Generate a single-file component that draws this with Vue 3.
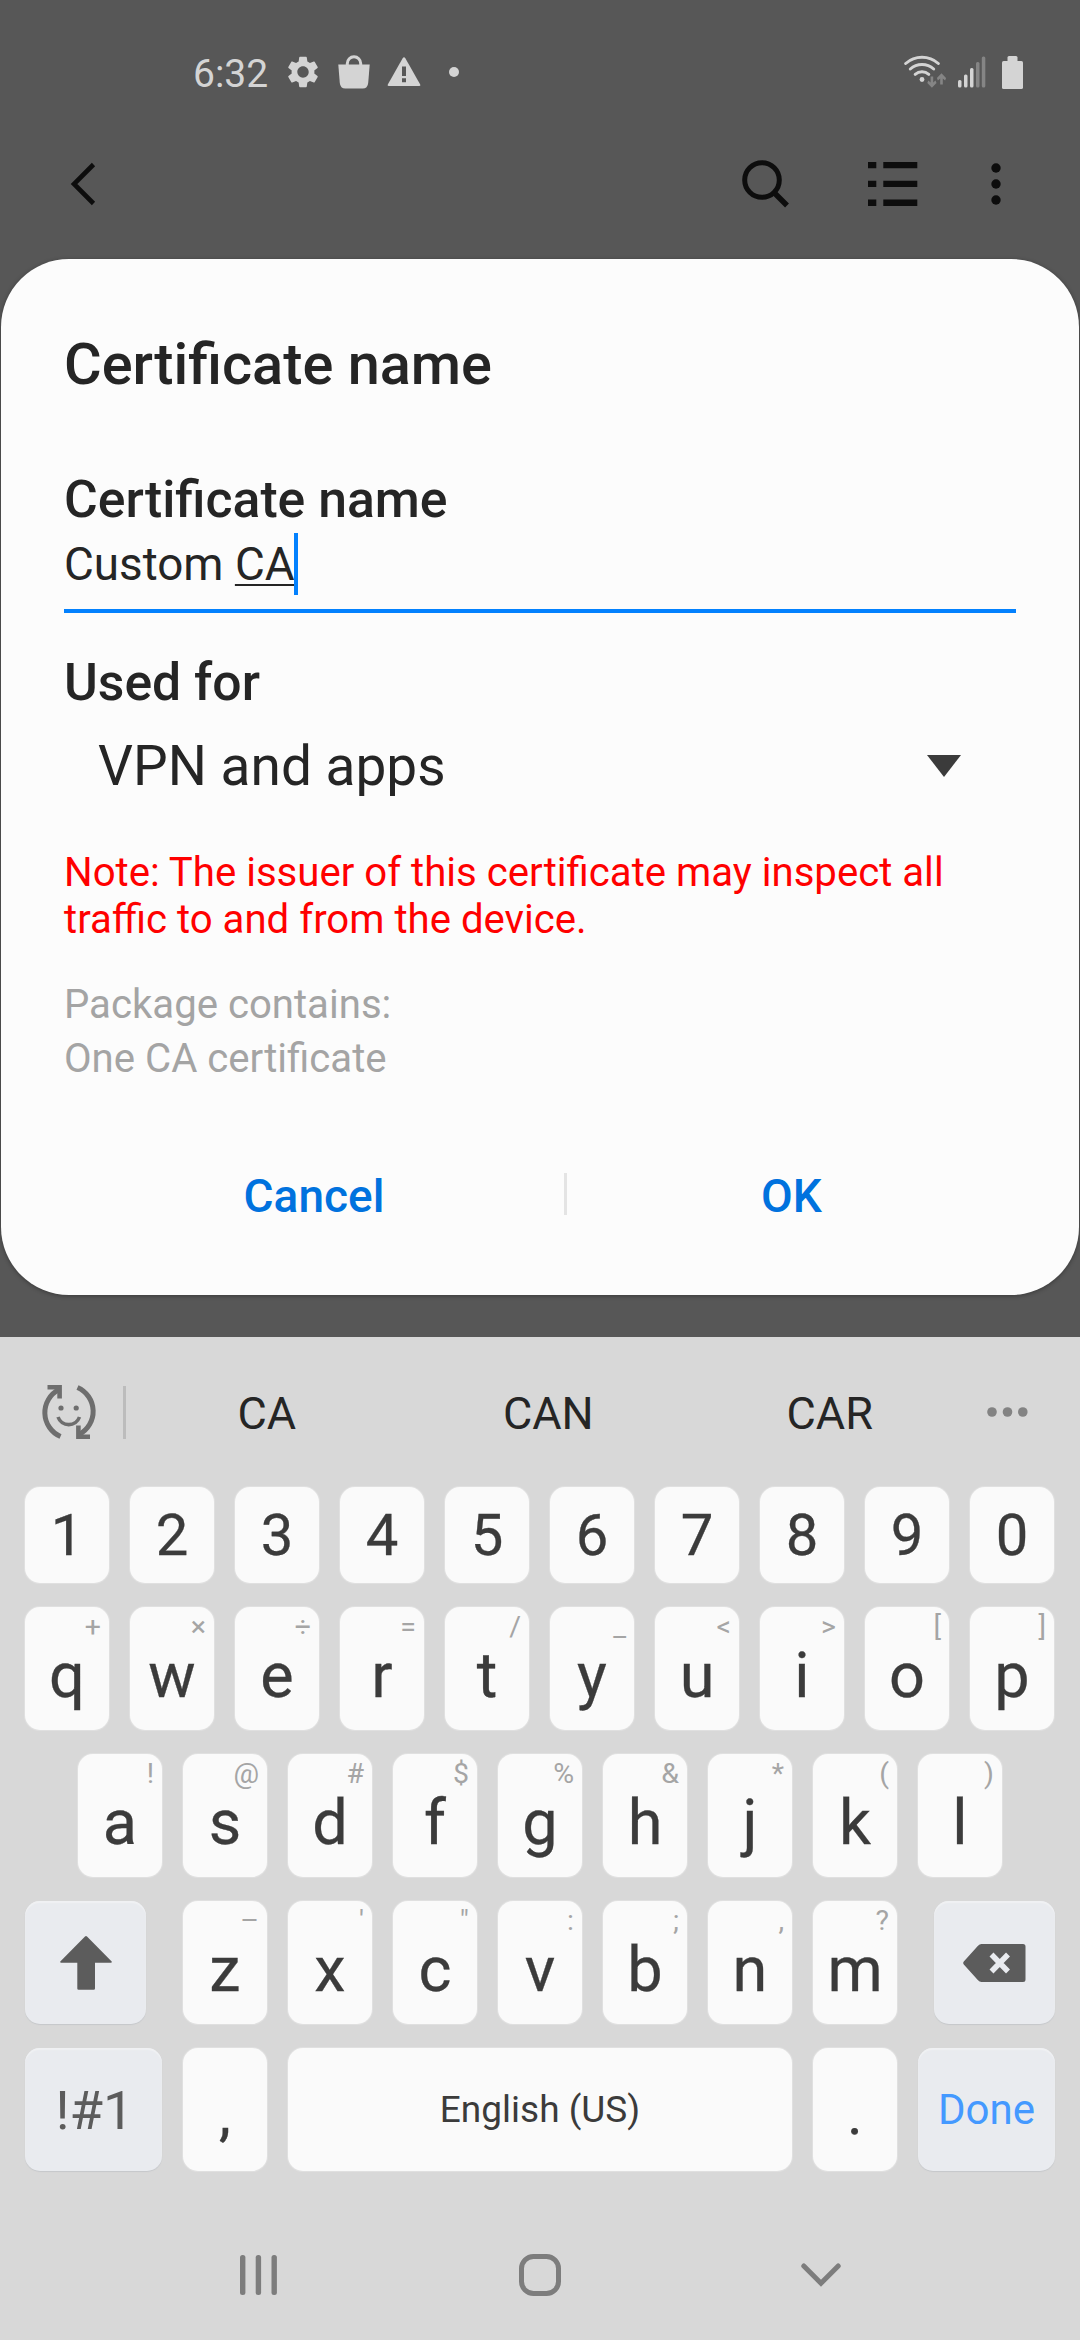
<script setup>
const suggestions = ['CA', 'CAN', 'CAR']
const digits = ['1', '2', '3', '4', '5', '6', '7', '8', '9', '0']
const toKeys = (letters, hints) => [...letters].map((label, i) => ({ label, hint: [...hints][i] }))
const topRow = toKeys('qwertyuiop', '+×÷=/_<>[]')
const homeRow = toKeys('asdfghjkl', '!@#$%&*()')
const bottomRow = toKeys('zxcvbnm', '–\'":;,?')
</script>

<template>
  <div class="screen">
    <header class="status">
      <span class="clock">6:32</span>
      <svg class="gear" width="38" height="38" viewBox="0 0 24 24" fill="#d4d4d4">
        <path d="M19.14 12.94c.04-.3.06-.61.06-.94 0-.32-.02-.64-.07-.94l2.03-1.58a.49.49 0 0 0 .12-.61l-1.92-3.32a.488.488 0 0 0-.59-.22l-2.39.96c-.5-.38-1.03-.7-1.62-.94l-.36-2.54a.484.484 0 0 0-.48-.41h-3.84c-.24 0-.43.17-.47.41l-.36 2.54c-.59.24-1.13.57-1.62.94l-2.39-.96c-.22-.08-.47 0-.59.22L2.74 8.87c-.12.21-.08.47.12.61l2.03 1.58c-.05.3-.09.63-.09.94s.02.64.07.94l-2.03 1.58a.49.49 0 0 0-.12.61l1.92 3.32c.12.22.37.29.59.22l2.39-.96c.5.38 1.03.7 1.62.94l.36 2.54c.05.24.24.41.48.41h3.84c.24 0 .44-.17.47-.41l.36-2.54c.59-.24 1.13-.56 1.62-.94l2.39.96c.22.08.47 0 .59-.22l1.92-3.32c.12-.22.07-.47-.12-.61l-2.01-1.58zM12 15.6A3.61 3.61 0 0 1 8.4 12c0-1.98 1.62-3.6 3.6-3.6s3.6 1.62 3.6 3.6-1.62 3.6-3.6 3.6z" />
      </svg>
      <svg class="bag" width="32" height="34" viewBox="0 0 32 34">
        <path d="M9.3 10V8.500a6.500 6.500 0 0 1 13.400 0V10" fill="none" stroke="#d4d4d4" stroke-width="3" />
        <path d="M.3 9.500h31.400l-1.500 18.500q-.6 5.600-5.500 5.600H7.300q-4.900 0-5.500-5.600z" fill="#d4d4d4" />
      </svg>
      <svg class="warn" width="34" height="30" viewBox="0 0 34 30">
        <path d="M15.800 1q1.200-1.600 2.400 0l15 26.500q.6 1.500-1 1.500H1.800q-1.600 0-1-1.500z" fill="#d4d4d4" />
        <path d="M15 9.500h4v9.500h-4zM15 21.300h4v4h-4z" fill="#575757" />
      </svg>
      <i class="more-dot"></i>
      <svg class="wifi" width="42" height="34" viewBox="0 0 42 34" fill="none">
        <g stroke="#d4d4d4" stroke-width="3" stroke-linecap="round">
          <path d="M1.700 8.500a24.500 24.500 0 0 1 32.600 0" />
          <path d="M6.300 14a17.500 17.500 0 0 1 23.400 0" />
          <path d="M11.200 19.300a10.500 10.500 0 0 1 13.600 0" />
        </g>
        <circle cx="18" cy="24.500" r="2.400" fill="#d4d4d4" />
        <g fill="#858585">
          <path d="M26.600 21.500h2.600v6l2.300-2 1 2.500-4.600 4.800-4.600-4.800 1-2.500 2.300 2z" />
          <path d="M36.200 29.500h2.600v-6l2.300 2 1-2.500-4.600-4.800-4.600 4.800 1 2.500 2.300-2z" />
        </g>
      </svg>
      <svg class="signal" width="28" height="32" viewBox="0 0 28 32">
        <g fill="#d4d4d4">
          <rect x="0" y="24" width="3.500" height="7.500" rx="1.500" />
          <rect x="6" y="18.500" width="3.500" height="13" rx="1.500" />
          <rect x="12" y="12" width="3.500" height="19.500" rx="1.500" />
        </g>
        <g fill="#858585">
          <rect x="18" y="6" width="3.500" height="25.500" rx="1.500" />
          <rect x="23.800" y=".5" width="3.500" height="31" rx="1.500" />
        </g>
      </svg>
      <svg class="battery" width="21" height="33" viewBox="0 0 21 33" fill="#d4d4d4">
        <rect y="5" width="21" height="28" rx="1.600" />
        <rect x="5.500" y="0" width="10" height="8" rx="1.500" />
      </svg>
    </header>

    <nav class="appbar">
      <svg width="26" height="44" viewBox="0 0 26 44" fill="none" stroke="#0d0d0d" stroke-width="4.600">
        <path d="M23.500 2.500L4 22l19.500 19.500" />
      </svg>
      <svg class="search" width="48" height="48" viewBox="0 0 48 48" fill="none" stroke="#0d0d0d">
        <circle cx="20" cy="20" r="17.300" stroke-width="5" />
        <path d="M32 32.500L45 45.500" stroke-width="5.500" />
      </svg>
      <svg class="list" width="50" height="44" viewBox="0 0 50 44" fill="#0d0d0d">
        <path d="M0 0h8.300v6.300H0zM15.300 0h34v6.300h-34zM0 18.700h8.300V25H0zM15.300 18.700h34V25h-34zM0 37.600h8.300v6.300H0zM15.300 37.600h34v6.300h-34z" />
      </svg>
      <svg class="kebab" width="10" height="42" viewBox="0 0 10 42" fill="#0d0d0d">
        <circle cx="5" cy="5" r="4.700" /><circle cx="5" cy="21" r="4.700" /><circle cx="5" cy="37" r="4.700" />
      </svg>
    </nav>

    <main class="dialog">
      <h1>Certificate name</h1>
      <h2>Certificate name</h2>
      <div class="field">Custom <span class="composing">CA<i class="caret"></i></span></div>
      <h2 class="used">Used for</h2>
      <div class="spinner">
        <span>VPN and apps</span>
        <svg width="34" height="22" viewBox="0 0 34 22" fill="#3b3b3b"><path d="M0 0h34L17 22z" /></svg>
      </div>
      <p class="note">Note: The issuer of this certificate may inspect all traffic to and from the device.</p>
      <p class="package">Package contains:<br />One CA certificate</p>
      <div class="actions">
        <span class="cancel">Cancel</span>
        <i></i>
        <span class="ok">OK</span>
      </div>
    </main>

    <section class="keyboard">
      <div class="suggestions">
        <svg class="emoji" width="56" height="56" viewBox="0 0 56 56" fill="none" stroke="#6e6e6e" stroke-width="5">
          <path d="M19.500 52.500A26 26 0 0 1 18 5.500" />
          <path d="M36.500 3.500A26 26 0 0 1 38 50.500" />
          <path d="M6.500 3.200H18.600V14.500M49 52.800H37.400V41.500" stroke-width="4.600" />
          <path d="M17 33a11.400 11.400 0 0 0 21.500 0" stroke-width="3.600" />
          <g fill="#6e6e6e" stroke="none"><circle cx="20" cy="24" r="2.600" /><circle cx="35.200" cy="24" r="2.600" /></g>
        </svg>
        <i class="bar"></i>
        <span v-for="word in suggestions" :key="word">{{ word }}</span>
        <svg class="dots" width="42" height="10" viewBox="0 0 42 10" fill="#838383">
          <circle cx="5" cy="5" r="4.800" /><circle cx="20.500" cy="5" r="4.800" /><circle cx="35.800" cy="5" r="4.800" />
        </svg>
      </div>

      <div class="row digits">
        <div v-for="d in digits" :key="d" class="key digit">{{ d }}</div>
      </div>
      <div class="row">
        <div v-for="k in topRow" :key="k.label" class="key letter">{{ k.label }}<sup>{{ k.hint }}</sup></div>
      </div>
      <div class="row home">
        <div v-for="k in homeRow" :key="k.label" class="key letter">{{ k.label }}<sup>{{ k.hint }}</sup></div>
      </div>
      <div class="row">
        <div class="key fn shift">
          <svg width="52" height="54" viewBox="0 0 52 54" fill="#5c5c5c">
            <path d="M25 .6q1-1 2 0L51.700 25.500q.5 1.300-.8 1.300H35V52.500q0 1.300-1.300 1.300H18.600q-1.300 0-1.300-1.300V26.800H1.100q-1.300 0-.8-1.300z" />
          </svg>
        </div>
        <div v-for="k in bottomRow" :key="k.label" class="key letter">{{ k.label }}<sup>{{ k.hint }}</sup></div>
        <div class="key fn erase">
          <svg width="63" height="38" viewBox="0 0 63 38">
            <path d="M18.500 0H60q2.500 0 2.500 2.500v33Q62.500 38 60 38H18.500q-2 0-3.500-1.700L.8 20.500q-1.200-1.500 0-3L15 1.700Q16.500 0 18.500 0z" fill="#5c5c5c" />
            <path d="M28.500 10.500L45 27.500M45 10.500L28.500 27.500" stroke="#e9ebef" stroke-width="5.500" />
          </svg>
        </div>
      </div>
      <div class="row">
        <div class="key fn symbols">!#1</div>
        <div class="key punct">,</div>
        <div class="key space">English (US)</div>
        <div class="key punct">.</div>
        <div class="key fn done">Done</div>
      </div>

      <footer class="navbar">
        <svg width="38" height="42" viewBox="0 0 38 42" fill="#7d7d7d">
          <rect x="0" y="1" width="5.400" height="40" rx="2.500" /><rect x="15.700" y="1" width="5.400" height="40" rx="2.500" /><rect x="31.500" y="1" width="5.400" height="40" rx="2.500" />
        </svg>
        <svg width="42" height="42" viewBox="0 0 42 42" fill="none" stroke="#7d7d7d" stroke-width="5">
          <rect x="2.500" y="2.500" width="37" height="37" rx="12" />
        </svg>
        <svg width="40" height="24" viewBox="0 0 40 24" fill="none" stroke="#7d7d7d" stroke-width="5" stroke-linecap="round">
          <path d="M2.800 3L20 20.300 37.200 3" />
        </svg>
      </footer>
    </section>
  </div>
</template>

<style>
body {
  margin: 0;
  background: #575757;
}
</style>

<style scoped>
.screen {
  width: 1080px;
  height: 2340px;
  overflow: hidden;
  display: flex;
  flex-direction: column;
  background: #575757;
  font-family: Roboto, "Noto Sans", sans-serif;
  color: #252525;
}
.status,
.appbar,
.dialog {
  flex: none;
}
svg {
  display: block;
  flex: none;
}
h1,
h2,
p {
  margin: 0;
}

.status {
  display: flex;
  align-items: center;
  height: 144px;
  padding-left: 193px;
}
.clock {
  width: 76px;
  padding-top: 3px;
  font-size: 39px;
  line-height: 46px;
  color: #d4d4d4;
}
.gear { margin-left: 15px; }
.bag { margin-left: 16px; }
.warn { margin-left: 17px; }
.more-dot {
  width: 10px;
  height: 10px;
  margin-left: 28px;
  border-radius: 50%;
  background: #d4d4d4;
}
.wifi { margin-left: 445px; }
.signal { margin-left: 12px; }
.battery { margin-left: 16px; }

.appbar {
  display: flex;
  align-items: center;
  height: 79px;
  padding-left: 70px;
}
.search { margin: 1px 0 0 646px; }
.list { margin-left: 78px; }
.kebab { margin-left: 73px; }

.dialog {
  box-sizing: border-box;
  width: 1078px;
  height: 1036px;
  margin: 36px 1px 0;
  padding: 72px 63px 0;
  border-radius: 68px;
  background: #fcfcfc;
  box-shadow: 0 1px 4px rgba(0, 0, 0, 0.35);
}
h1 {
  font-size: 57.700px;
  font-weight: 500;
  line-height: 66px;
}
h2 {
  margin-top: 73px;
  font-size: 51.700px;
  font-weight: 500;
  line-height: 60px;
}
.field {
  box-sizing: border-box;
  height: 83px;
  padding-top: 8px;
  border-bottom: 4px solid #0381fe;
  font-size: 45.800px;
  line-height: 54px;
}
.composing {
  position: relative;
  text-decoration: underline;
  text-decoration-thickness: 2px;
  text-underline-offset: 4px;
  text-decoration-skip-ink: none;
}
.caret {
  position: absolute;
  right: -3px;
  top: -5px;
  width: 4px;
  height: 62px;
  background: #0381fe;
}
.used { margin-top: 40px; }
.spinner {
  display: flex;
  align-items: center;
  justify-content: space-between;
  height: 106px;
  padding: 0 55px 0 34px;
  font-size: 55px;
}
.note {
  margin-top: 30px;
  font-size: 40.150px;
  line-height: 47px;
  color: #f00;
}
.package {
  margin-top: 35px;
  font-size: 40.150px;
  line-height: 54px;
  color: #a4a4a4;
}
.actions {
  display: flex;
  align-items: center;
  height: 42px;
  margin-top: 87px;
  font-size: 46px;
  font-weight: 500;
  line-height: 54px;
  color: #0072de;
  text-align: center;
}
.actions i {
  width: 3px;
  height: 42px;
  background: #e4e4e4;
}
.actions span { padding-top: 3px; }
.cancel { width: 500px; }
.ok { width: 449px; }

.keyboard {
  display: flex;
  flex-direction: column;
  flex: none;
  height: 1003px;
  gap: 24px;
  margin-top: 42px;
  background: #d8d8d8;
}
.suggestions {
  display: flex;
  align-items: center;
  height: 150px;
  margin-bottom: -24px;
  padding-left: 41px;
  font-size: 45px;
  line-height: 54px;
}
.suggestions span {
  width: 281.500px;
  padding-top: 4px;
  text-align: center;
}
.bar {
  width: 3px;
  height: 53px;
  margin-left: 26px;
  background: #bcbcbc;
}
.dots { margin-left: 16px; }

.row {
  display: flex;
  flex: none;
  gap: 21px;
  height: 123px;
  padding-left: 25px;
}
.digits { height: 96px; }
.home { padding-left: 78px; }
.key {
  position: relative;
  box-sizing: border-box;
  display: flex;
  align-items: center;
  justify-content: center;
  width: 84px;
  border-radius: 15px;
  background: #fafafa;
  box-shadow: 0 0 1px 1px rgba(255, 255, 255, 0.25);
  color: #3b3b3b;
}
.digit {
  font-size: 58px;
  -webkit-text-stroke: 0.3px #3b3b3b;
}
.letter {
  padding-top: 15px;
  font-size: 63px;
  line-height: 72px;
  -webkit-text-stroke: 0.3px #3b3b3b;
}
sup {
  position: absolute;
  top: 4px;
  right: 8px;
  font-size: 28.500px;
  line-height: 32px;
  color: #a5a5a5;
  -webkit-text-stroke: 0;
}
.fn {
  background: #e9ebef;
  box-shadow: inset 0 2px 1px #f0f1f3, 0 1px 1px #c6c8cb;
  color: #5c5c5c;
}
.shift { width: 121px; margin-right: 16px; }
.erase { width: 121px; margin-left: 16px; }
.symbols {
  width: 137px;
  padding-left: 2px;
  font-size: 54.500px;
}
.punct {
  padding-top: 8px;
  font-size: 60px;
  -webkit-text-stroke: 0.3px #3b3b3b;
}
.space {
  width: 504px;
  font-size: 37px;
}
.done {
  width: 137px;
  font-size: 42px;
  color: #4499ff;
}

.navbar {
  box-sizing: border-box;
  display: flex;
  align-items: center;
  justify-content: space-between;
  height: 145px;
  padding: 15px 239px 0 240px;
}
</style>
